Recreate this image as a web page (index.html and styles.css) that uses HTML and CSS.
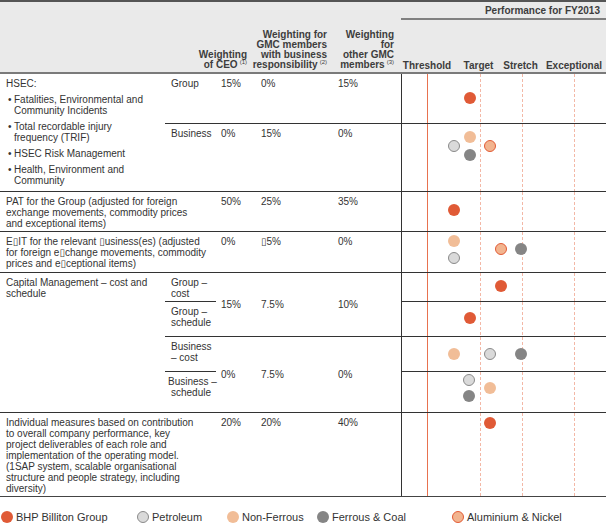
FILE: index.html
```html
<!DOCTYPE html>
<html>
<head>
<meta charset="utf-8">
<link rel="stylesheet" href="styles.css">
</head>
<body>
<div class="table">
  <div class="hd hd-ceo"><div class="hd-t">Weighting<br>of CEO<sup>(1)</sup></div></div>
  <div class="hd hd-bus"><div class="hd-t">Weighting for<br>GMC members<br>with business<br>responsibility<sup>(2)</sup></div></div>
  <div class="hd hd-oth"><div class="hd-t">Weighting<br>for<br>other GMC<br>members<sup>(3)</sup></div></div>
  <div class="hd hd-perf">
    <div class="perf-title">Performance for FY2013</div>
    <div class="perf-labels"><span>Threshold</span><span>Target</span><span>Stretch</span><span class="lab-exc">Exceptional</span></div>
  </div>

  <!-- HSEC -->
  <div class="c desc rs2 first">
    <div>HSEC:</div>
    <ul class="bl">
      <li>Fatalities, Environmental and<br>Community Incidents</li>
      <li>Total recordable injury<br>frequency (TRIF)</li>
      <li>HSEC Risk Management</li>
      <li>Health, Environment and<br>Community</li>
    </ul>
  </div>
  <div class="c sub first">Group</div>
  <div class="c val first">15%</div>
  <div class="c val first">0%</div>
  <div class="c val first">15%</div>
  <div class="c perf first">
    <span class="dot bhp" style="left:62px;top:18px"></span>
  </div>

  <div class="c sub">Business</div>
  <div class="c val">0%</div>
  <div class="c val">15%</div>
  <div class="c val">0%</div>
  <div class="c perf">
    <span class="dot nf" style="left:62px;top:7px"></span>
    <span class="dot pet" style="left:46px;top:16px"></span>
    <span class="dot fc" style="left:62px;top:25px"></span>
    <span class="dot al" style="left:82px;top:16px"></span>
  </div>

  <!-- PAT -->
  <div class="c desc wide">PAT for the Group (adjusted for foreign<br>exchange movements, commodity prices<br>and exceptional items)</div>
  <div class="c val">50%</div>
  <div class="c val">25%</div>
  <div class="c val">35%</div>
  <div class="c perf">
    <span class="dot bhp" style="left:46px;top:12px"></span>
  </div>

  <!-- EBIT -->
  <div class="c desc wide">E<span class="tofu">▯</span>IT for the relevant <span class="tofu">▯</span>usiness(es) (adjusted<br>for foreign e<span class="tofu">▯</span>change movements, commodity<br>prices and e<span class="tofu">▯</span>ceptional items)</div>
  <div class="c val">0%</div>
  <div class="c val"><span class="tofu">▯</span>5%</div>
  <div class="c val">0%</div>
  <div class="c perf">
    <span class="dot nf" style="left:46px;top:3px"></span>
    <span class="dot pet" style="left:46px;top:20px"></span>
    <span class="dot al" style="left:93px;top:11px"></span>
    <span class="dot fc" style="left:113px;top:11px"></span>
  </div>

  <!-- Capital Management -->
  <div class="c desc rs4">Capital Management – cost and<br>schedule</div>
  <div class="c sub">Group –<br>cost</div>
  <div class="c val mid rs2">15%</div>
  <div class="c val mid rs2">7.5%</div>
  <div class="c val mid rs2">10%</div>
  <div class="c perf">
    <span class="dot bhp" style="left:93px;top:7px"></span>
  </div>
  <div class="c sub">Group –<br>schedule</div>
  <div class="c perf">
    <span class="dot bhp" style="left:62px;top:10px"></span>
  </div>
  <div class="c sub">Business<br>– cost</div>
  <div class="c val mid rs2">0%</div>
  <div class="c val mid rs2">7.5%</div>
  <div class="c val mid rs2">0%</div>
  <div class="c perf">
    <span class="dot nf" style="left:46px;top:11px"></span>
    <span class="dot pet" style="left:82px;top:11px"></span>
    <span class="dot fc" style="left:113px;top:11px"></span>
  </div>
  <div class="c sub sub-tight">Business –<br>schedule</div>
  <div class="c perf">
    <span class="dot pet" style="left:61px;top:2px"></span>
    <span class="dot fc" style="left:61px;top:18px"></span>
    <span class="dot nf" style="left:82px;top:10px"></span>
  </div>

  <!-- Individual -->
  <div class="c desc wide">Individual measures based on contribution<br>to overall company performance, key<br>project deliverables of each role and<br>implementation of the operating model.<br>(1SAP system, scalable organisational<br>structure and people strategy, including<br>diversity)</div>
  <div class="c val">20%</div>
  <div class="c val">20%</div>
  <div class="c val">40%</div>
  <div class="c perf">
    <span class="dot bhp" style="left:82px;top:4px"></span>
  </div>
</div>

<div class="legend">
  <div class="li"><span class="dot bhp"></span>BHP Billiton Group</div>
  <div class="li"><span class="dot pet"></span>Petroleum</div>
  <div class="li"><span class="dot nf"></span>Non-Ferrous</div>
  <div class="li"><span class="dot fc"></span>Ferrous &amp; Coal</div>
  <div class="li"><span class="dot al"></span>Aluminium &amp; Nickel</div>
</div>
</body>
</html>
```

FILE: styles.css
```css
* {
  box-sizing: border-box;
  margin: 0;
  padding: 0;
}

html, body {
  overflow: hidden;
}

body {
  margin: 0;
  width: 606px;
  background: #ffffff;
  font-family: "Liberation Sans", Arial, sans-serif;
  font-size: 10px;
  color: #333333;
}

.table {
  display: grid;
  grid-template-columns: 165px 51px 40px 77px 68px 205px;
  grid-template-rows: 72px 49px 68px 40px 41px 29px 35px 35px 41px 84px;
  border-top: 2px solid #555555;
  border-bottom: 1px solid #444444;
}

/* header */
.hd {
  background: #eaeaea;
  border-bottom: 2px solid #7a7a7a;
  display: flex;
  align-items: flex-end;
  justify-content: flex-end;
  font-weight: bold;
  line-height: 10px;
  color: #3d3d3d;
  padding-bottom: 2px;
}

.hd-ceo {
  grid-column: span 3;
  padding-right: 9px;
}

.hd-bus {
  padding-right: 6px;
}

.hd-oth {
  padding-right: 7px;
}

.hd-t {
  text-align: right;
  white-space: nowrap;
  flex: none;
}

sup {
  font-size: 6px;
  font-weight: normal;
  line-height: 6px;
  vertical-align: top;
  position: relative;
  top: -1px;
  margin-left: 2px;
}

.hd-perf {
  flex-direction: column;
  align-items: stretch;
  justify-content: space-between;
  padding-bottom: 1px;
}

.perf-title {
  text-align: right;
  padding: 3px 6px 1px 0;
  line-height: 12px;
  border-bottom: 2px solid #808080;
}

.perf-labels {
  display: grid;
  grid-template-columns: 52px 51px 33px 69px;
  justify-items: center;
  white-space: nowrap;
  line-height: 10px;
}

.lab-exc {
  margin-left: 5px;
}

/* body cells */
.c {
  border-top: 1px solid #333333;
  padding-top: 4px;
  line-height: 11px;
}

.c.first {
  border-top: 0;
}

.desc {
  padding-left: 6px;
  padding-right: 6px;
  white-space: nowrap;
}

.desc.wide {
  grid-column: span 2;
}

.rs2 {
  grid-row: span 2;
}

.rs4 {
  grid-row: span 4;
}

.sub {
  padding-left: 6px;
  white-space: nowrap;
}

.sub-tight {
  text-indent: -3px;
}

.val {
  padding-left: 5px;
  white-space: nowrap;
}

.val.mid {
  display: flex;
  align-items: center;
  padding-top: 0;
}

.bl {
  list-style: none;
}

.bl li {
  margin-top: 5px;
  padding-left: 8px;
}

.bl li::before {
  content: "•";
  display: inline-block;
  width: 6px;
  margin-left: -6px;
}

.tofu {
  font-family: "DejaVu Sans", sans-serif;
  font-size: 10px;
  color: #444444;
}

.perf {
  position: relative;
  border-left: 1px solid #333333;
  background-image:
    linear-gradient(#e8724f, #e8724f),
    repeating-linear-gradient(to bottom, #f3b8a6 0 3px, transparent 3px 5px),
    repeating-linear-gradient(to bottom, #f3b8a6 0 3px, transparent 3px 5px),
    repeating-linear-gradient(to bottom, #f3b8a6 0 3px, transparent 3px 5px);
  background-size: 1px 100%;
  background-repeat: no-repeat;
  background-position: 25px 0, 78px 0, 120px 0, 172px 0;
}

/* dots */
.dot {
  display: block;
  width: 12px;
  height: 12px;
  border-radius: 50%;
}

.perf .dot {
  position: absolute;
}

.bhp {
  background: #e05a36;
}

.pet {
  background: #dadada;
  border: 1px solid #8a8a8a;
}

.nf {
  background: #f1bd97;
}

.fc {
  background: #858585;
}

.al {
  background: #f2b48f;
  border: 1px solid #e25b36;
}

/* legend */
.legend {
  display: grid;
  grid-template-columns: 136px 90px 90px 135px 1fr;
  padding: 14px 0 0 1px;
  font-size: 11px;
  color: #333333;
}

.li {
  display: flex;
  align-items: center;
  gap: 3px;
  white-space: nowrap;
}

.li .dot {
  flex: none;
}
```
